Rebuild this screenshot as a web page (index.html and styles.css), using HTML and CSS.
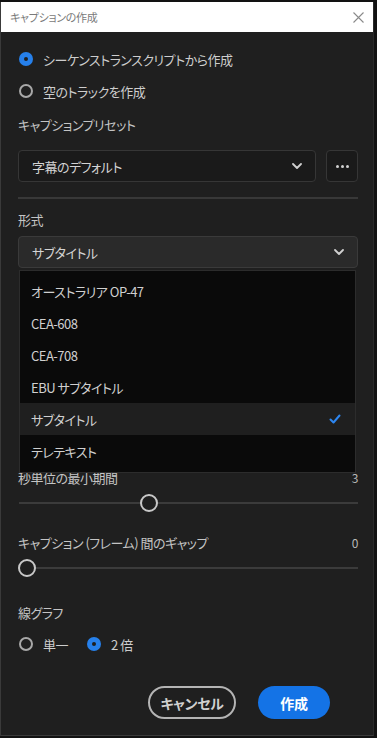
FILE: index.html
```html
<!DOCTYPE html>
<html lang="ja">
<head>
    <meta charset="UTF-8">
    <meta name="viewport" content="width=device-width, initial-scale=1.0">
    <title>キャプションの作成</title>
    <link rel="stylesheet" href="styles.css">
</head>
<body>
    <div class="dialog">
        <!-- Title bar -->
        <div class="titlebar">
            <span class="title">キャプションの作成</span>
            <svg class="close" width="11" height="11" viewBox="0 0 11 11">
                <path d="M0.5 0.5 L10.5 10.5 M10.5 0.5 L0.5 10.5" stroke="#8a8a8a" stroke-width="1.1" fill="none"/>
            </svg>
        </div>

        <div class="content">
            <div class="radio-row">
                <span class="radio checked"></span>
                <span>シーケンストランスクリプトから作成</span>
            </div>
            <div class="radio-row">
                <span class="radio"></span>
                <span>空のトラックを作成</span>
            </div>

            <div class="label preset-label">キャプションプリセット</div>
            <div class="preset-row">
                <div class="select preset-select">
                    <span>字幕のデフォルト</span>
                    <svg class="chevron" width="10" height="6" viewBox="0 0 10 6">
                        <path d="M1 1 L5 5 L9 1" stroke="#d0d0d0" stroke-width="1.8" fill="none" stroke-linecap="round" stroke-linejoin="round"/>
                    </svg>
                </div>
                <div class="more-btn">
                    <span class="dot"></span><span class="dot"></span><span class="dot"></span>
                </div>
            </div>

            <div class="separator"></div>

            <div class="label format-label">形式</div>
            <div class="format-wrap">
                <div class="select format-select">
                    <span>サブタイトル</span>
                    <svg class="chevron" width="10" height="6" viewBox="0 0 10 6">
                        <path d="M1 1 L5 5 L9 1" stroke="#d0d0d0" stroke-width="1.8" fill="none" stroke-linecap="round" stroke-linejoin="round"/>
                    </svg>
                </div>

                <!-- Open dropdown menu -->
                <ul class="menu">
                    <li>オーストラリア OP-47</li>
                    <li>CEA-608</li>
                    <li>CEA-708</li>
                    <li>EBU サブタイトル</li>
                    <li class="selected">
                        <span>サブタイトル</span>
                        <svg width="12" height="10" viewBox="0 0 12 10">
                            <path d="M1.5 5.5 L4.5 8.5 L10.5 1.5" stroke="#2d86f0" stroke-width="2" fill="none" stroke-linecap="round" stroke-linejoin="round"/>
                        </svg>
                    </li>
                    <li>テレテキスト</li>
                </ul>
            </div>

            <!-- area hidden under the menu -->
            <div class="hidden-area"></div>

            <div class="label value-label duration-label">
                <span>秒単位の最小期間</span>
                <span class="value">3</span>
            </div>
            <div class="slider">
                <div class="track"></div>
                <span class="thumb" style="left: 122px;"></span>
            </div>

            <div class="label value-label gap-label">
                <span>キャプション (フレーム) 間のギャップ</span>
                <span class="value">0</span>
            </div>
            <div class="slider">
                <div class="track"></div>
                <span class="thumb" style="left: 0px;"></span>
            </div>

            <div class="label lines-label">線グラフ</div>
            <div class="radio-inline">
                <div class="radio-row">
                    <span class="radio"></span>
                    <span>単一</span>
                </div>
                <div class="radio-row">
                    <span class="radio checked"></span>
                    <span>2 倍</span>
                </div>
            </div>

            <div class="buttons">
                <button class="btn cancel">キャンセル</button>
                <button class="btn create">作成</button>
            </div>
        </div>
    </div>
</body>
</html>
```

FILE: styles.css
```css
body {
    margin: 0;
    padding: 0;
    background-color: #121212;
    font-family: "Noto Sans CJK JP", "Noto Sans", sans-serif;
    font-feature-settings: "palt";
    letter-spacing: -0.5px;
    color: #cdcdcd;
    overflow: hidden;
}

.dialog {
    width: 372px;
    height: 733px;
    margin-top: 2px;
    background-color: #1f1f1f;
    border-left: 1px solid #3a3a3a;
    border-bottom: 1px solid #3a3a3a;
    border-right: 1px solid #2a2a2a;
}

.titlebar {
    height: 30px;
    background-color: #ffffff;
    display: flex;
    justify-content: space-between;
    align-items: center;
    padding: 0 9px 0 9px;
}

.title {
    font-size: 11px;
    letter-spacing: -0.3px;
    color: #7a7a7a;
}

.content {
    padding: 11px 15px 0 17px;
    position: relative;
}

.radio-row {
    height: 32px;
    display: flex;
    align-items: center;
    gap: 10px;
    font-size: 13px;
    padding-left: 1px;
}

.radio {
    width: 10px;
    height: 10px;
    border: 2px solid #a8a8a8;
    border-radius: 50%;
    flex-shrink: 0;
    position: relative;
}

.radio.checked {
    width: 14px;
    height: 14px;
    border: none;
    background-color: #2680eb;
}

.radio.checked::after {
    content: "";
    position: absolute;
    width: 4px;
    height: 4px;
    border-radius: 50%;
    background-color: #1f1f1f;
    left: 5px;
    top: 5px;
}

.label {
    font-size: 13px;
    line-height: 20px;
    color: #c4c4c4;
}

.preset-label {
    margin-top: 8px;
}

.preset-row {
    display: flex;
    gap: 10px;
    margin-top: 15px;
}

.select {
    height: 30px;
    border: 1px solid #363636;
    border-radius: 4px;
    display: flex;
    justify-content: space-between;
    align-items: center;
    padding: 0 13px 0 13px;
    font-size: 13px;
    color: #d4d4d4;
}

.preset-select {
    flex: 1;
    background-color: #1a1a1a;
}

.more-btn {
    width: 30px;
    height: 30px;
    border: 1px solid #363636;
    border-radius: 4px;
    background-color: #1a1a1a;
    display: flex;
    justify-content: center;
    align-items: center;
    gap: 2px;
}

.dot {
    width: 3px;
    height: 3px;
    border-radius: 50%;
    background-color: #d0d0d0;
}

.separator {
    height: 2px;
    background-color: #383838;
    margin-top: 15px;
}

.format-label {
    margin-top: 11px;
}

.format-wrap {
    position: relative;
    margin-top: 6px;
}

.format-select {
    background-color: #2a2a2a;
    border-color: #3a3a3a;
}

.menu {
    position: absolute;
    top: 34px;
    left: 1px;
    width: 337px;
    margin: 0;
    padding: 4px 0 5px 0;
    list-style: none;
    background-color: #0a0a0a;
    border: 1px solid #2c2c2c;
    box-sizing: border-box;
    z-index: 10;
}

.menu li {
    height: 32px;
    display: flex;
    align-items: center;
    justify-content: space-between;
    padding: 0 14px 0 11px;
    font-size: 13px;
    color: #d0d0d0;
}

.menu li.selected {
    background-color: #1f1f1f;
}

.hidden-area {
    height: 200px;
}

.value-label {
    display: flex;
    justify-content: space-between;
    padding-right: 0;
}

.value {
    font-size: 12px;
    color: #b8b8b8;
}

.gap-label {
    margin-top: 19px;
}

.slider {
    position: relative;
    height: 22px;
    margin-top: 4px;
}

.track {
    position: absolute;
    left: 1px;
    right: 0;
    top: 10px;
    height: 2px;
    background-color: #3b3b3b;
}

.thumb {
    position: absolute;
    top: 2px;
    width: 14px;
    height: 14px;
    border: 2px solid #c8c8c8;
    border-radius: 50%;
    background-color: #1f1f1f;
}

.lines-label {
    margin-top: 24px;
}

.radio-inline {
    display: flex;
    gap: 18px;
    margin-top: 9px;
}

.radio-inline .radio-row {
    height: 24px;
}

.buttons {
    display: flex;
    justify-content: flex-end;
    gap: 22px;
    margin-top: 30px;
    padding-right: 28px;
}

.btn {
    height: 33px;
    border-radius: 17px;
    font-family: "Noto Sans CJK JP", "Noto Sans", sans-serif;
    font-feature-settings: "palt";
    letter-spacing: -0.3px;
    font-size: 14px;
    font-weight: bold;
    cursor: pointer;
}

.cancel {
    width: 88px;
    background-color: transparent;
    border: 2px solid #b4b4b4;
    color: #d0d0d0;
}

.create {
    width: 72px;
    background-color: #1473e6;
    border: none;
    color: #ffffff;
}
```
